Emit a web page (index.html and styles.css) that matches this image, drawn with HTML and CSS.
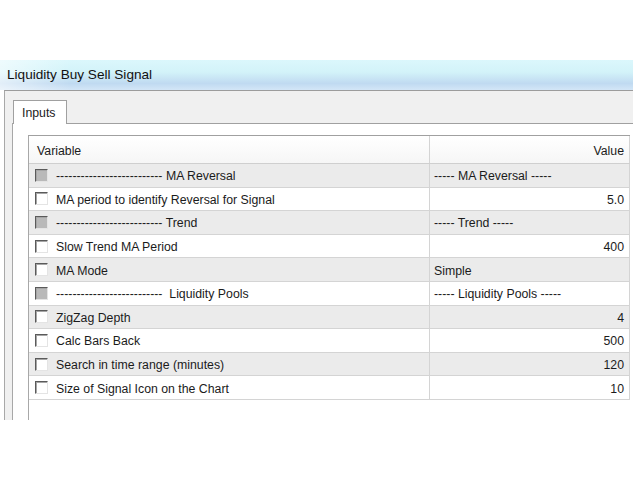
FILE: index.html
```html
<html>

<head>
    <meta charset="utf-8">
    <title>Liquidity Buy Sell Signal</title>
    <link rel="stylesheet" href="styles.css">
</head>

<body>
    <div class="window">
        <div class="titlebar">Liquidity Buy Sell Signal</div>
        <div class="frame">
            <div class="tabs">
                <div class="tab">Inputs</div>
            </div>
            <div class="panel">
                <div class="grid">
                    <div class="row head">
                        <div class="cell">Variable</div>
                        <div class="cell num">Value</div>
                    </div>
                    <div class="row odd">
                        <div class="cell"><span class="box group"></span>-------------------------- MA Reversal</div>
                        <div class="cell">----- MA Reversal -----</div>
                    </div>
                    <div class="row">
                        <div class="cell"><span class="box"></span>MA period to identify Reversal for Signal</div>
                        <div class="cell num">5.0</div>
                    </div>
                    <div class="row odd">
                        <div class="cell"><span class="box group"></span>-------------------------- Trend</div>
                        <div class="cell">----- Trend -----</div>
                    </div>
                    <div class="row">
                        <div class="cell"><span class="box"></span>Slow Trend MA Period</div>
                        <div class="cell num">400</div>
                    </div>
                    <div class="row odd">
                        <div class="cell"><span class="box"></span>MA Mode</div>
                        <div class="cell">Simple</div>
                    </div>
                    <div class="row">
                        <div class="cell"><span class="box group"></span>--------------------------&nbsp; Liquidity Pools</div>
                        <div class="cell">----- Liquidity Pools -----</div>
                    </div>
                    <div class="row odd">
                        <div class="cell"><span class="box"></span>ZigZag Depth</div>
                        <div class="cell num">4</div>
                    </div>
                    <div class="row">
                        <div class="cell"><span class="box"></span>Calc Bars Back</div>
                        <div class="cell num">500</div>
                    </div>
                    <div class="row odd">
                        <div class="cell"><span class="box"></span>Search in time range (minutes)</div>
                        <div class="cell num">120</div>
                    </div>
                    <div class="row">
                        <div class="cell"><span class="box"></span>Size of Signal Icon on the Chart</div>
                        <div class="cell num">10</div>
                    </div>
                </div>
            </div>
        </div>
    </div>
</body>

</html>
```

FILE: styles.css
```css
* {
    margin: 0;
    padding: 0;
    box-sizing: border-box;
}

body {
    background: #ffffff;
    font-family: "Liberation Sans", Arial, sans-serif;
    font-size: 12.3px;
    color: #1b1b1b;
}

.window {
    width: 633px;
    padding-top: 60px;
}

.titlebar {
    height: 30px;
    padding-left: 7px;
    line-height: 29px;
    font-size: 13.6px;
    color: #111;
    background:
        linear-gradient(to right, rgba(255, 255, 255, 0.55), rgba(255, 255, 255, 0) 70px),
        linear-gradient(to bottom, #dbf7fc 0%, #d3f3f9 40%, #c0daf1 78%, #d3e6f7 100%);
}

.frame {
    margin-left: 4px;
    border-left: 1px solid #a8a8a8;
    border-top: 1px solid #9c9c9c;
    background: #f0f0f0;
}

.tabs {
    height: 32px;
    display: flex;
    align-items: flex-end;
    padding-left: 8px;
}

.tab {
    position: relative;
    width: 54px;
    height: 24px;
    margin-bottom: -1px;
    padding: 1px 0 0 8px;
    line-height: 22px;
    background: #ffffff;
    border: 1px solid #a0a0a0;
    border-bottom: none;
}

.panel {
    height: 297px;
    margin-left: 7px;
    padding: 11px 0 0 15px;
    background: #ffffff;
    border-left: 1px solid #a8a8a8;
    border-top: 1px solid #a0a0a0;
}

.grid {
    width: 602px;
    height: 285px;
    border-left: 1px solid #a8a8a8;
    border-top: 1px solid #a0a0a0;
}

.row {
    display: grid;
    grid-template-columns: 401px 200px;
    height: 23.6px;
    border-bottom: 1px solid #d4d4d4;
}

.row.odd {
    background: #ebebeb;
}

.row.head {
    height: 28px;
    border-bottom: 1px solid #cfcfcf;
    background: linear-gradient(to bottom, #ffffff, #f6f6f6);
}

.cell {
    display: flex;
    align-items: center;
    padding: 2px 6px 0;
    white-space: nowrap;
    border-right: 1px solid #d4d4d4;
}

.row.head .cell:first-child {
    padding-left: 8px;
}

.row .cell:last-child {
    padding-left: 4px;
}

.cell.num {
    justify-content: flex-end;
    padding-right: 5px;
}

.box {
    width: 13px;
    height: 13px;
    margin: -2px 8px 0 0;
    flex: none;
    background: #ffffff;
    border: 1px solid;
    border-color: #5a5a5a #e4e4e4 #e4e4e4 #5a5a5a;
    box-shadow: inset 1px 1px 0 #a6a6a6;
}

.box.group {
    background: #b9b9b9;
}
```
